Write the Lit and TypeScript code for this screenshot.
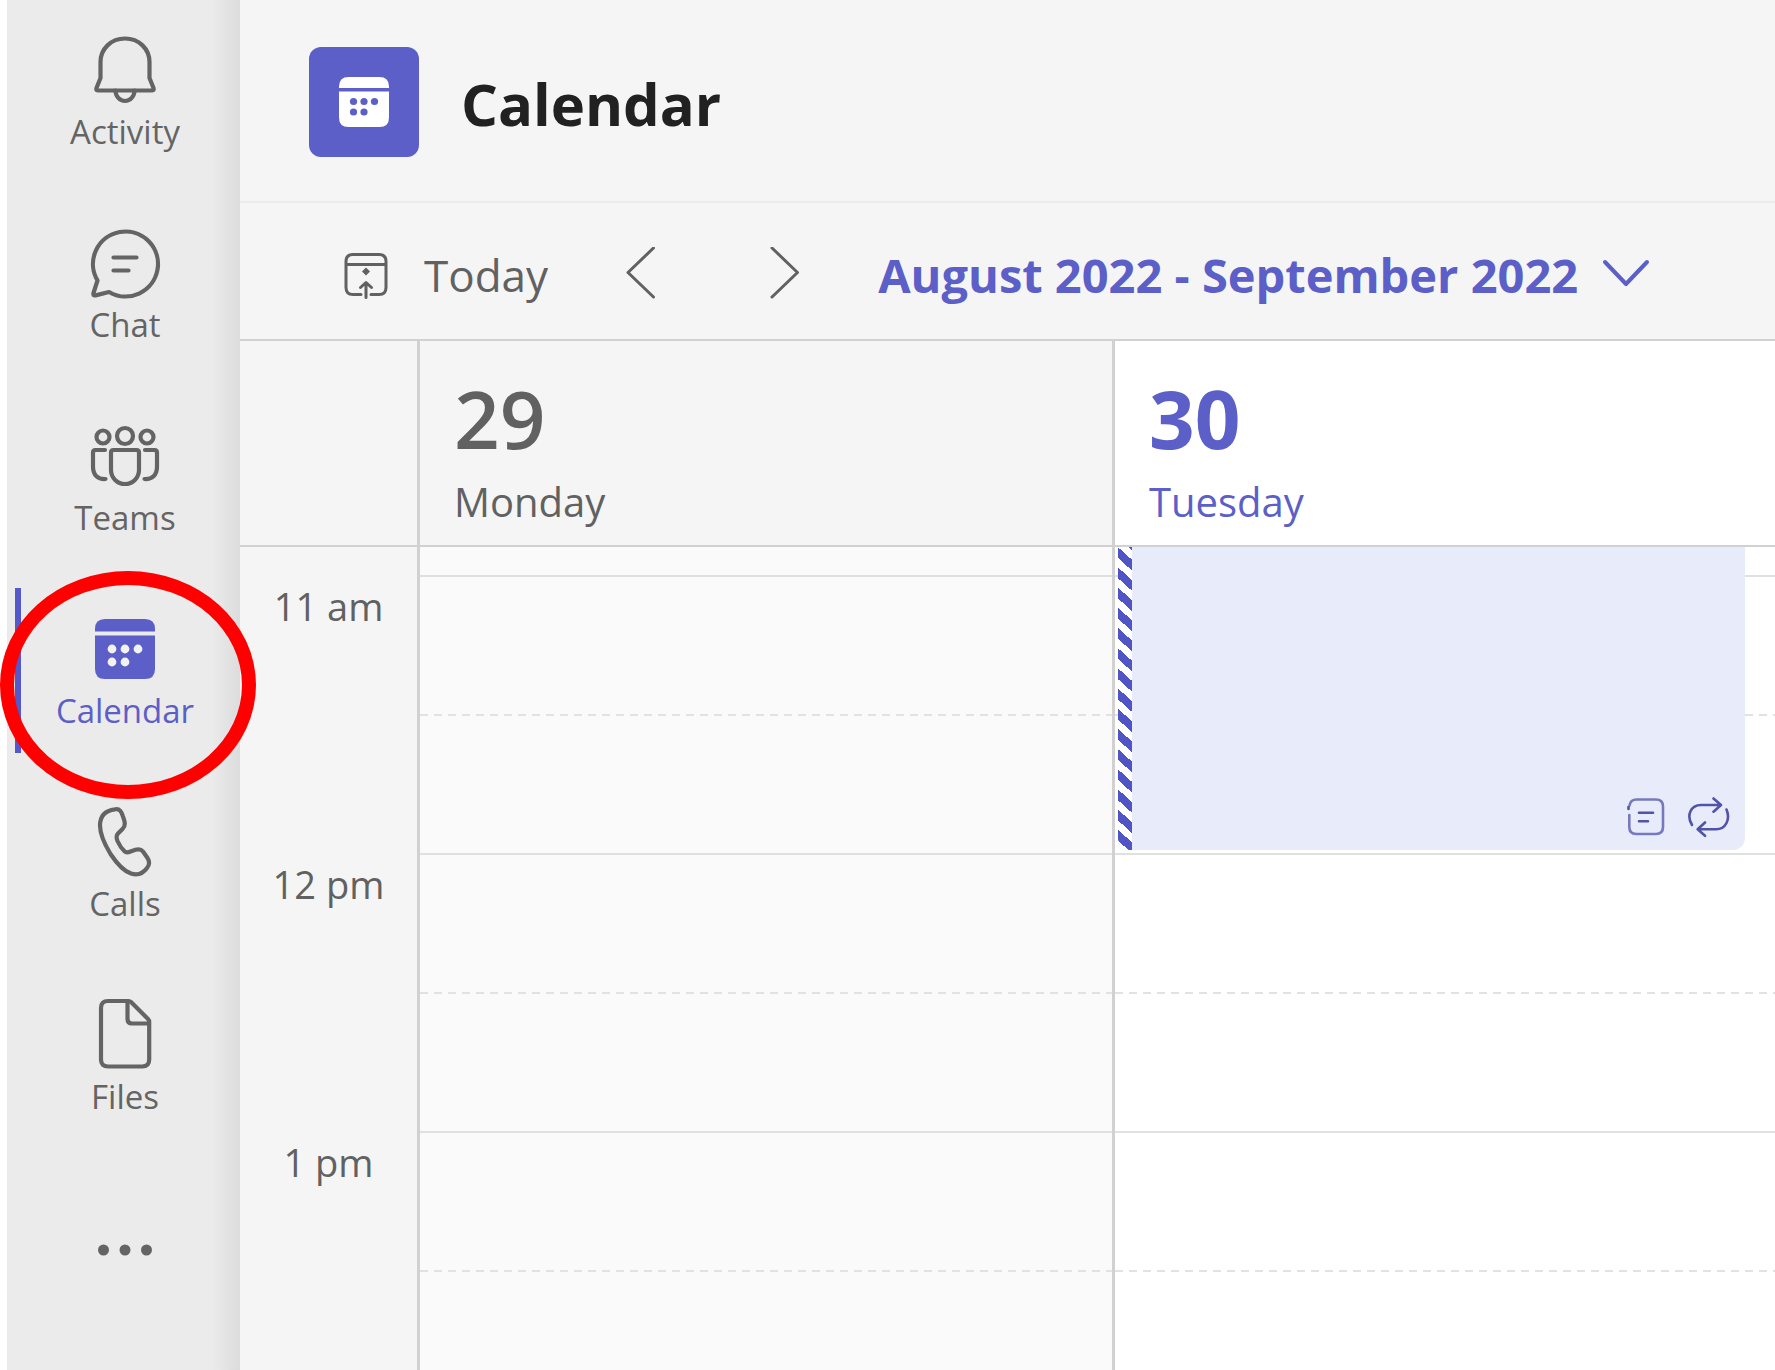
import { LitElement, html, svg, css, type TemplateResult } from "lit";
import { customElement, state } from "lit/decorators.js";
import { classMap } from "lit/directives/class-map.js";

interface NavItem {
  id: string;
  label: string;
  icon: TemplateResult;
}

const NAV_ITEMS: NavItem[] = [
  {
    id: "activity",
    label: "Activity",
    icon: svg`<path d="M38 6.5C24 6.5 13.5 17 13.5 30V46L9.5 56q-.8 2.5 1.2 2.5H65.3q2 0 1.2-2.5L62.5 46V30C62.5 17 52 6.5 38 6.5Z"/><path d="M28.5 58.5a9.5 10.5 0 0 0 19 0"/>`,
  },
  {
    id: "chat",
    label: "Chat",
    icon: svg`<path d="M10.5 55.5L6.5 68q-.7 3 2 2.4L22 67A32.5 32.5 0 1 0 10.5 55.5Z"/><path d="M26.5 32.5H49.5M26.5 45.5H41.5"/>`,
  },
  {
    id: "teams",
    label: "Teams",
    icon: svg`<circle cx="16" cy="19" r="6.5"/><circle cx="38" cy="18" r="8"/><circle cx="60" cy="19" r="6.5"/><path d="M26.5 32H49.5Q52 32 52 34.5V52a14 14 0 0 1-28 0V34.5Q24 32 26.5 32Z"/><path d="M18 32H8.500Q6 32 6 34.500V49C6 57 11 61.500 18.500 61M58 32H67.500Q70 32 70 34.500V49C70 57 65 61.500 57.500 61"/>`,
  },
  {
    id: "calendar",
    label: "Calendar",
    icon: svg`<path class="solid" d="M8 20.500V18Q8 8 18 8H58Q68 8 68 18V20.500ZM8 24.500H68V58Q68 68 58 68H18Q8 68 8 58Z"/><g class="dots"><circle cx="25" cy="38" r="4.400"/><circle cx="38" cy="38" r="4.400"/><circle cx="51" cy="38" r="4.400"/><circle cx="25" cy="51" r="4.400"/><circle cx="38" cy="51" r="4.400"/></g>`,
  },
  {
    id: "calls",
    label: "Calls",
    icon: svg`<path d="M28 5.300C33 4.500 34.500 8 36 12.500C38 18 39 21.500 35.500 25L31 29.500C29 31.500 29.300 34 30.500 37C32.500 41.500 34.500 44.500 37.500 47.300C39 48.800 41 48.600 43.500 47.500L48.500 45.800C51.500 44.800 54 45 56 47.500L60.500 54C62.800 57.500 62.500 61 60 64C56 69.500 50 71.500 44 69.500C36 67 29.500 59 23.500 50C17.500 40 13 31 13 21.500C13 12 18.500 6.500 28 5.300Z"/>`,
  },
  {
    id: "files",
    label: "Files",
    icon: svg`<path d="M21 4H41.500q1.500 0 2.500 1L61 22q1.200 1.200 1.200 3V62.500q0 7-7 7H21q-7 0-7-7V11q0-7 7-7Z"/><path d="M40.500 5V22q0 4.500 4.500 4.500H61.500"/>`,
  },
];

const HOURS = ["11 am", "12 pm", "1 pm"];

@customElement("side-nav")
export class SideNav extends LitElement {
  @state() private current = "calendar";

  static styles = css`
    :host {
      display: block;
      background: linear-gradient(to left, #dcdcdc, #ebebeb 28px);
      font-family: "Open Sans", "Noto Sans", sans-serif;
    }
    .rail {
      display: flex;
      flex-direction: column;
      gap: 28px;
      padding: 9px 11px 0 8px;
    }
    .item {
      display: flex;
      flex-direction: column;
      align-items: center;
      gap: 4px;
      height: 165px;
      padding: 23px 0 0;
      border: 0;
      border-left: 6px solid transparent;
      background: none;
      color: #646464;
      font: 400 33px/40px "Open Sans", "Noto Sans", sans-serif;
      cursor: pointer;
    }
    .item.active {
      border-left-color: #5558c8;
      color: #5b5fc7;
    }
    .item.more {
      justify-content: center;
      padding: 0;
    }
    .icon {
      width: 76px;
      height: 76px;
      fill: none;
      stroke: currentColor;
      stroke-width: 4.2;
      stroke-linecap: round;
      stroke-linejoin: round;
    }
    .solid {
      fill: currentColor;
      stroke: none;
    }
    .dots {
      fill: #f2f2f2;
      stroke: none;
    }
  `;

  render() {
    return html`
      <nav class="rail" aria-label="Apps">
        ${NAV_ITEMS.map(
          (item) => html`
            <button
              class=${classMap({ item: true, active: item.id === this.current })}
              @click=${() => (this.current = item.id)}
            >
              <svg class="icon" viewBox="0 0 76 76" aria-hidden="true">${item.icon}</svg>
              <span>${item.label}</span>
            </button>
          `
        )}
        <button class="item more" aria-label="More apps">
          <svg class="icon" viewBox="0 0 76 76" aria-hidden="true">
            <g class="solid">
              <circle cx="16.500" cy="38" r="5.500" />
              <circle cx="38" cy="38" r="5.500" />
              <circle cx="59.500" cy="38" r="5.500" />
            </g>
          </svg>
        </button>
      </nav>
    `;
  }
}

@customElement("calendar-toolbar")
export class CalendarToolbar extends LitElement {
  static styles = css`
    :host {
      display: block;
      border-bottom: 2px solid #d1d1d1;
    }
    .bar {
      display: flex;
      align-items: center;
      height: 136px;
      box-sizing: border-box;
      padding: 7px 0 0 102px;
    }
    button {
      display: flex;
      align-items: center;
      flex: none;
      padding: 0;
      border: 0;
      background: none;
      color: #616161;
      font: 400 44px/60px "Open Sans", "Noto Sans", sans-serif;
      white-space: nowrap;
      cursor: pointer;
    }
    .today {
      gap: 34px;
    }
    .arrows {
      display: flex;
      gap: 104px;
      padding: 0 73px;
    }
    .range {
      gap: 24px;
      color: #5b5fc7;
      font-weight: 700;
      font-size: 47px;
    }
    svg {
      fill: none;
      stroke: currentColor;
      stroke-width: 3;
      stroke-linecap: round;
      stroke-linejoin: round;
    }
    .glyph {
      width: 48px;
      height: 48px;
    }
    .arrow {
      width: 40px;
      height: 56px;
    }
    .down {
      width: 48px;
      height: 48px;
      stroke-width: 4;
    }
    .dot {
      fill: currentColor;
      stroke: none;
    }
  `;

  render() {
    return html`
      <div class="bar">
        <button class="today">
          <svg class="glyph" viewBox="0 0 48 48" aria-hidden="true">
            <path d="M19 43.500H11q-7 0-7-7V10.500q0-7 7-7H37q7 0 7 7V36.500q0 7-7 7H29M4 13.500H44" />
            <path d="M24 46.500V32M18.500 36.500L24 31.500L29.500 36.500" />
            <path class="dot" d="M24 16.500L28 20.500L24 24.500L20 20.500Z" />
          </svg>
          <span>Today</span>
        </button>
        <div class="arrows">
          <button aria-label="Previous week">
            <svg class="arrow" viewBox="0 0 40 56" aria-hidden="true"><path d="M32.500 1L7 25.500L32.500 50" /></svg>
          </button>
          <button aria-label="Next week">
            <svg class="arrow" viewBox="0 0 40 56" aria-hidden="true"><path d="M7 1L32.500 25.500L7 50" /></svg>
          </button>
        </div>
        <button class="range">
          <span>August 2022 - September 2022</span>
          <svg class="down" viewBox="0 0 48 48" aria-hidden="true"><path d="M3 11L24 33L45 11" /></svg>
        </button>
      </div>
    `;
  }
}

@customElement("week-grid")
export class WeekGrid extends LitElement {
  static styles = css`
    :host {
      display: flex;
      flex-direction: column;
      flex: 1;
      color: #616161;
    }
    .row {
      display: grid;
      grid-template-columns: 177px 695fr 663fr;
    }
    .head {
      border-bottom: 2px solid #d1d1d1;
    }
    .body {
      flex: 1;
    }
    .day,
    .slots {
      border-left: 3px solid #d1d1d1;
      background: #fafafa;
    }
    .day {
      display: flex;
      flex-direction: column;
      gap: 20px;
      height: 204px;
      box-sizing: border-box;
      padding: 37px 0 0 34px;
      background: #f5f5f5;
    }
    .day.current,
    .slots.current {
      background: #fff;
    }
    .day.current {
      color: #5b5fc7;
    }
    .number {
      margin: 0;
      font-size: 80px;
      line-height: 80px;
      font-weight: 600;
    }
    .current .number {
      font-weight: 700;
    }
    .name {
      font-size: 40px;
      line-height: 48px;
    }
    .hours {
      padding-top: 30px;
      font-size: 38px;
      line-height: 48px;
      text-align: center;
    }
    .hour {
      height: 278px;
      box-sizing: border-box;
      padding-top: 5px;
    }
    .hour:last-child {
      height: 237px;
    }
    .slots {
      display: flex;
      flex-direction: column;
      position: relative;
    }
    .slot {
      height: 139px;
      box-sizing: border-box;
    }
    .slot.full {
      border-bottom: 2px solid #e0e0e0;
    }
    .slot.first {
      height: 30px;
    }
    .slot.half {
      background: repeating-linear-gradient(to right, #e2e2e2 0 8px, transparent 8px 14px) bottom / 100% 2px no-repeat;
    }
    /* The meeting lies over the hour lines of its day. */
    .event {
      position: absolute;
      top: 0;
      left: 3px;
      right: 30px;
      height: 303px;
      display: flex;
      justify-content: flex-end;
      align-items: flex-end;
      gap: 20px;
      box-sizing: border-box;
      padding: 0 15px 12px 0;
      border-radius: 0 0 12px 12px;
      overflow: hidden;
      background: #e8ebfa;
      color: #5153a6;
    }
    .stripe {
      align-self: stretch;
      width: 14px;
      margin: 0 auto -12px 0;
      background: repeating-linear-gradient(42deg, #fff 0 7px, #5054c4 7px 15px);
    }
    .mark {
      width: 42px;
      height: 42px;
      fill: none;
      stroke: currentColor;
      stroke-width: 2.6;
      stroke-linecap: round;
      stroke-linejoin: round;
    }
    .soft {
      stroke: #7779bf;
    }
  `;

  private renderSlots() {
    return html`
      <div class="slot full first"></div>
      <div class="slot half"></div>
      <div class="slot full"></div>
      <div class="slot half"></div>
      <div class="slot full"></div>
      <div class="slot half"></div>
    `;
  }

  render() {
    return html`
      <div class="row head">
        <div></div>
        <div class="day">
          <h2 class="number">29</h2>
          <div class="name">Monday</div>
        </div>
        <div class="day current">
          <h2 class="number">30</h2>
          <div class="name">Tuesday</div>
        </div>
      </div>
      <div class="row body">
        <div class="hours">${HOURS.map((hour) => html`<div class="hour">${hour}</div>`)}</div>
        <div class="slots">${this.renderSlots()}</div>
        <div class="slots current">
          ${this.renderSlots()}
          <div class="event">
            <div class="stripe"></div>
            <svg class="mark" viewBox="0 0 42 42" aria-hidden="true">
              <path class="soft" d="M3.300 19V31q0 7 7 7H30q7 0 7-7V10.500q0-7-7-7H10.500q-6 0-7 6" />
              <path d="M2.500 11V13M13 16.700H27M13 25.200H22" />
            </svg>
            <svg class="mark" viewBox="0 0 42 42" aria-hidden="true">
              <path d="M4 29C-2 19 3 9 13 9H32M25.500 2.500L33 9L25.500 15.700" />
              <path d="M38.500 13.500C42.500 23 38 33.300 28 33.300H10M17 26.500L9.700 33.300L17 39.800" />
            </svg>
          </div>
        </div>
      </div>
    `;
  }
}

@customElement("app-root")
export class AppRoot extends LitElement {
  static styles = css`
    :host {
      display: block;
      background: #fff;
      font-family: "Open Sans", "Noto Sans", sans-serif;
    }
    .page {
      position: relative;
      display: grid;
      grid-template-columns: 233px 1fr;
      min-height: 100vh;
      box-sizing: border-box;
      padding-left: 7px;
      overflow: hidden;
    }
    .main {
      display: flex;
      flex-direction: column;
      min-width: 0;
      background: #f5f5f5;
    }
    .title-bar {
      display: flex;
      align-items: center;
      gap: 42px;
      padding: 47px 69px 44px;
      border-bottom: 2px solid #ebebeb;
    }
    .badge {
      width: 110px;
      height: 110px;
      border-radius: 12px;
      background: #5b5fc7;
      fill: #fff;
    }
    .badge-dots {
      fill: #5b5fc7;
    }
    .title {
      margin: 0;
      padding-top: 4px;
      color: #212121;
      font-size: 58px;
      line-height: 72px;
      font-weight: 700;
    }
    /* Highlight ring laid over the navigation. */
    .ring {
      position: absolute;
      left: 0;
      top: 571px;
      width: 256px;
      height: 228px;
      box-sizing: border-box;
      border: 14px solid #f00;
      border-radius: 50%;
      pointer-events: none;
    }
  `;

  render() {
    return html`
      <div class="page">
        <side-nav></side-nav>
        <main class="main">
          <header class="title-bar">
            <svg class="badge" viewBox="0 0 110 110" aria-hidden="true">
              <path d="M30 41V39.500Q30 30 39.500 30H70.500Q80 30 80 39.500V41ZM30 44.500H80V70.500Q80 80 70.500 80H39.500Q30 80 30 70.500Z" />
              <g class="badge-dots">
                <circle cx="44.500" cy="54.500" r="3.600" />
                <circle cx="55" cy="54.500" r="3.600" />
                <circle cx="65.500" cy="54.500" r="3.600" />
                <circle cx="44.500" cy="65" r="3.600" />
                <circle cx="55" cy="65" r="3.600" />
              </g>
            </svg>
            <h1 class="title">Calendar</h1>
          </header>
          <calendar-toolbar></calendar-toolbar>
          <week-grid></week-grid>
        </main>
        <div class="ring"></div>
      </div>
    `;
  }
}
